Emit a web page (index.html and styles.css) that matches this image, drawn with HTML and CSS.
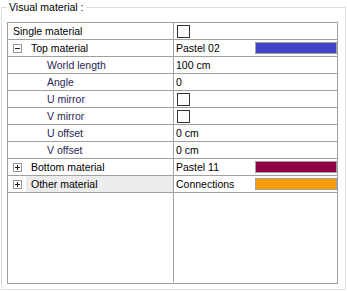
FILE: index.html
```html
<!DOCTYPE html>
<html lang="en">
<head>
  <meta charset="UTF-8" />
  <title>Visual material</title>
  <link rel="stylesheet" href="styles.css">
</head>
<body>
  <fieldset class="group">
    <legend>Visual material :</legend>
    <div class="grid">
      <div class="row">
        <div class="name"><span class="label top">Single material</span></div>
        <div class="value"><span class="check"></span></div>
      </div>
      <div class="row">
        <div class="name">
          <span class="tree">
            <svg width="9" height="9"><rect x="0.5" y="0.5" width="8" height="8" fill="#fff" stroke="#969696"/><path d="M2 4.5h5" stroke="#222"/></svg>
          </span>
          <span class="label">Top material</span>
        </div>
        <div class="value">Pastel 02<span class="swatch blue"></span></div>
      </div>
      <div class="row">
        <div class="name"><span class="tree"></span><span class="label child">World length</span></div>
        <div class="value">100 cm</div>
      </div>
      <div class="row">
        <div class="name"><span class="tree"></span><span class="label child">Angle</span></div>
        <div class="value">0</div>
      </div>
      <div class="row">
        <div class="name"><span class="tree"></span><span class="label child">U mirror</span></div>
        <div class="value"><span class="check"></span></div>
      </div>
      <div class="row">
        <div class="name"><span class="tree"></span><span class="label child">V mirror</span></div>
        <div class="value"><span class="check"></span></div>
      </div>
      <div class="row">
        <div class="name"><span class="tree"></span><span class="label child">U offset</span></div>
        <div class="value">0 cm</div>
      </div>
      <div class="row">
        <div class="name"><span class="tree"></span><span class="label child">V offset</span></div>
        <div class="value">0 cm</div>
      </div>
      <div class="row">
        <div class="name">
          <span class="tree">
            <svg width="9" height="9"><rect x="0.5" y="0.5" width="8" height="8" fill="#fff" stroke="#969696"/><path d="M2 4.5h5M4.5 2v5" stroke="#222"/></svg>
          </span>
          <span class="label">Bottom material</span>
        </div>
        <div class="value">Pastel 11<span class="swatch maroon"></span></div>
      </div>
      <div class="row selected">
        <div class="name">
          <span class="tree">
            <svg width="9" height="9"><rect x="0.5" y="0.5" width="8" height="8" fill="#fff" stroke="#969696"/><path d="M2 4.5h5M4.5 2v5" stroke="#222"/></svg>
          </span>
          <span class="label">Other material</span>
        </div>
        <div class="value">Connections<span class="swatch orange"></span></div>
      </div>
      <div class="filler">
        <div class="name"></div>
        <div class="value"></div>
      </div>
    </div>
  </fieldset>
</body>
</html>
```

FILE: styles.css
```css
body {
  margin: 0;
  font-family: "Liberation Sans", Arial, sans-serif;
  font-size: 10.5px;
  color: #000;
  background: #fff;
}
.group {
  margin: 0 1px 1px 1px;
  padding: 8px 7px 5px 5px;
  border: 1px solid #dcdcdc;
  min-width: 0;
}
.group legend {
  padding: 0 2px;
  line-height: 14px;
  height: 14px;
}
.grid {
  display: flex;
  flex-direction: column;
  box-sizing: border-box;
  width: 331px;
  height: 262px;
  border: 1px solid #a0a0a0;
}
.row {
  display: flex;
  height: 17px;
  box-sizing: border-box;
  border-bottom: 1px solid #a0a0a0;
}
.name {
  display: flex;
  align-items: center;
  width: 166px;
  box-sizing: border-box;
  border-right: 1px solid #a0a0a0;
  flex-shrink: 0;
}
.value {
  display: flex;
  align-items: center;
  flex: 1;
  padding-left: 2px;
  line-height: 16px;
  white-space: nowrap;
}
.tree {
  display: flex;
  align-items: center;
  width: 18px;
  height: 16px;
  box-sizing: border-box;
  padding-left: 5px;
  flex-shrink: 0;
}
.tree svg {
  display: block;
}
.label {
  flex: 1;
  height: 16px;
  line-height: 16px;
  padding-left: 5px;
  white-space: nowrap;
}
.label.top {
  padding-left: 5px;
}
.label.child {
  padding-left: 21px;
  color: #2a1f55;
}
.selected .label {
  background: #ececec;
}
.check {
  display: block;
  width: 13px;
  height: 13px;
  box-sizing: border-box;
  margin-left: 1px;
  border: 1px solid #333;
  background: #fff;
}
.swatch {
  display: block;
  margin-left: auto;
  width: 82px;
  height: 12px;
  box-sizing: border-box;
  border: 1px solid #a0a0a0;
}
.swatch.blue {
  background: #4242c8;
}
.swatch.maroon {
  background: #900045;
}
.swatch.orange {
  background: #ff9c00;
}
.filler {
  display: flex;
  flex: 1;
}
.filler .name {
  height: calc(100% - 1px);
}
```
